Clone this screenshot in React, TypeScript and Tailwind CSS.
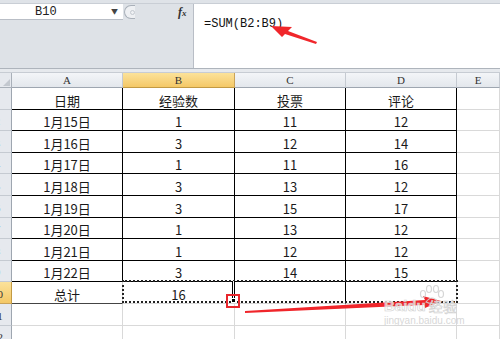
import React from "react"

const cols = ["A", "B", "C", "D", "E"]

const rows: string[][] = [
  ["日期", "经验数", "投票", "评论"],
  ["1月15日", "1", "11", "12"],
  ["1月16日", "3", "12", "14"],
  ["1月17日", "1", "11", "16"],
  ["1月18日", "3", "13", "12"],
  ["1月19日", "3", "15", "17"],
  ["1月20日", "1", "13", "12"],
  ["1月21日", "1", "12", "12"],
  ["1月22日", "3", "14", "15"],
  ["总计", "16", "", ""],
  ["", "", "", ""],
  ["", "", "", ""],
]

function cellBorder(r: number, c: number) {
  // r: 0-based data row, c: 0..4 (A..E)
  if (r <= 8 && c <= 3) return "border-r-black border-b-black"
  if (r === 9) {
    if (c === 0) return "border-r-[#d4d4d4] border-b-[#444]"
    if (c === 2) return "border-r-black border-b-[#d4d4d4]"
  }
  return "border-r-[#d9d9d9] border-b-[#d9d9d9]"
}

export default function App() {
  return (
    <div className="relative w-[500px] h-[339px] overflow-hidden bg-white font-['Noto_Sans_CJK_SC',sans-serif]">
      {/* top strip */}
      <div className="h-[4px] bg-[#dfe3e8] border-b border-[#c9ced5]" />

      {/* name box + formula bar */}
      <div className="flex h-[64px]">
        <div className="w-[193px] bg-[#dee2e7] flex flex-col">
          <div className="flex h-[16px] items-center">
            <div className="w-[123px] h-full bg-white border-b border-[#b9bec6] flex items-center">
              <span className="ml-[35px] text-[12px] leading-none text-[#222] font-['Liberation_Mono',monospace]">B10</span>
              <span className="ml-auto mr-[5px] text-[7px] text-[#444] leading-none">▼</span>
            </div>
            <div className="ml-[1px] w-[11px] h-[14px] rounded-l-full border border-r-0 border-[#a9b0b9] bg-[#eef0f3] flex items-center justify-end">
              <div className="w-[5px] h-[5px] rounded-full border border-[#c3c8cf]" />
            </div>
            <span className="ml-[43px] text-[12px] italic font-bold leading-none text-[#333] font-['Liberation_Serif',serif]">
              f<span className="text-[9px]">x</span>
            </span>
          </div>
        </div>
        <div className="flex-1 bg-white border-l border-[#b9bec6] pl-[10px] pt-[4px]">
          <span className="text-[12px] leading-none text-[#111] font-['Liberation_Mono',monospace]">=SUM(B2:B9)</span>
        </div>
      </div>

      {/* separator */}
      <div className="h-[5px] bg-[#e6e9ed] border-t border-[#aeb4bc] border-b border-b-[#c7ccd3]" />

      {/* sheet grid */}
      <div className="grid grid-cols-[12px_111px_112px_111px_111px_43px] grid-rows-[15px_repeat(12,21.6px)]">
        <div className="relative bg-[#e6e9ee] border-r border-b border-[#a9b0b9]">
          <div className="absolute right-[1px] bottom-[1px] w-0 h-0 border-l-[7px] border-l-transparent border-b-[7px] border-b-[#c3c8cf]" />
        </div>
        {cols.map((c) => (
          <div
            key={c}
            className={
              c === "B"
                ? "bg-gradient-to-b from-[#fbe29a] to-[#f4c866] border-r border-r-[#c9a35a] border-b border-b-[#c29a44] flex items-center justify-center text-[11px] leading-none text-[#333] font-['Liberation_Serif',serif]"
                : "bg-gradient-to-b from-[#f3f5f8] to-[#e3e7ec] border-r border-r-[#c5cad1] border-b border-b-[#9ea6b0] flex items-center justify-center text-[11px] leading-none text-[#333] font-['Liberation_Serif',serif]"
            }
          >
            {c}
          </div>
        ))}

        {rows.map((row, r) => (
          <React.Fragment key={r}>
            <div
              className={
                r === 9
                  ? "overflow-hidden bg-gradient-to-b from-[#fbe29a] to-[#f4c866] border-r border-r-[#c29a44] border-b border-b-[#c9a35a]"
                  : "overflow-hidden bg-[#e6e9ee] border-r border-r-[#9ea6b0] border-b border-b-[#c5cad1]"
              }
            >
              <div className="ml-[-17px] w-[29px] h-full flex items-end justify-center pb-[3px] text-[11px] leading-none text-[#333] font-['Liberation_Serif',serif]">
                {r + 1}
              </div>
            </div>
            {[0, 1, 2, 3, 4].map((c) => (
              <div
                key={c}
                className={`border-r border-b ${cellBorder(r, c)} flex items-end justify-center text-[13px] leading-[17px] text-[#1a1a1a]`}
              >
                {c < 4 ? row[c] : ""}
              </div>
            ))}
          </React.Fragment>
        ))}
      </div>

      {/* copy marquee over B10:D10 */}
      <div className="absolute left-[122px] top-[280px] w-[336px] h-[23px] border-2 border-dotted border-[#222]" />
      {/* active cell right edge */}
      <div className="absolute left-[232px] top-[281px] w-[3px] h-[18px] border-x border-black bg-white" />
      {/* fill handle */}
      <div className="absolute left-[231px] top-[298px] w-[5px] h-[5px] bg-black border border-white" />
      <div className="absolute left-[226px] top-[294px] w-[14px] h-[14px] border-2 border-[#e8262c]" />

      {/* annotations */}
      <svg className="absolute left-0 top-0" width="500" height="339" viewBox="0 0 500 339">
        <polygon points="271,26 292,27 288,31 317,42 316,44 285,34 282,37" fill="#f0262b" />
        <polygon points="245,311 425,300 423,296 441,301 425,308 424,305 245,313" fill="#f0262b" />
        <g fill="none" stroke="#d2d2d2" strokeWidth="1.2" opacity="0.9">
          <ellipse cx="423" cy="294" rx="2.5" ry="3.5" />
          <ellipse cx="429" cy="289" rx="2.5" ry="3.5" />
          <ellipse cx="436" cy="289" rx="2.5" ry="3.5" />
          <ellipse cx="441" cy="294" rx="2.5" ry="3.5" />
          <path d="M426 302 Q432 294 438 302 Q432 305 426 302 Z" />
        </g>
      </svg>
      <div className="absolute left-[384px] top-[298px] flex items-end gap-[3px]">
        <span className="text-[15px] font-bold leading-none text-white/70 [-webkit-text-stroke:0.6px_#cfcfcf] font-['Liberation_Sans',sans-serif]">Baidu</span>
        <span className="text-[14px] leading-none text-white/70 [-webkit-text-stroke:0.6px_#cfcfcf]">经验</span>
      </div>
      <div className="absolute left-[384px] top-[316px] text-[10px] leading-none text-[#d7d7d7] font-['Liberation_Sans',sans-serif]">
        jingyan.baidu.com
      </div>
    </div>
  )
}
